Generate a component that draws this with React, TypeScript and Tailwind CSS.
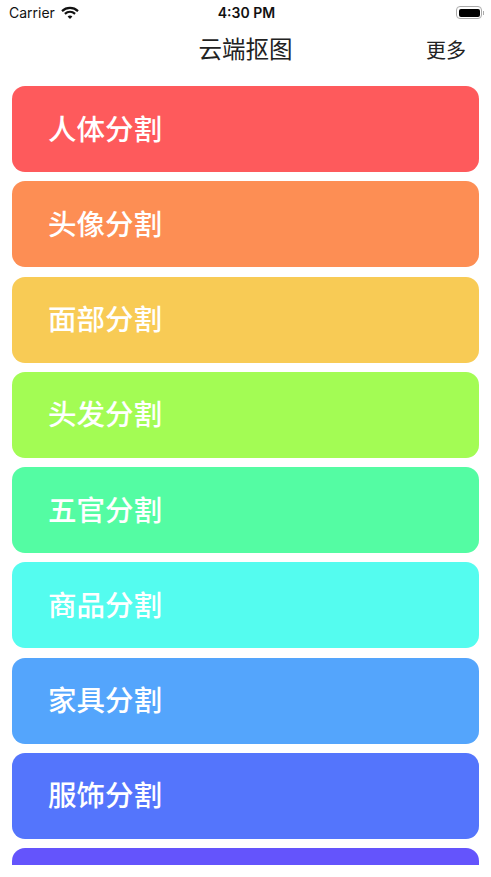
import React from 'react';

const font = "font-['Noto_Sans_CJK_SC','Liberation_Sans',sans-serif]";

const items = [
  { name: '人体分割', color: 'bg-[#fe5a5c]' },
  { name: '头像分割', color: 'bg-[#fd8e54]' },
  { name: '面部分割', color: 'bg-[#f8cb55]' },
  { name: '头发分割', color: 'bg-[#a3fc54]' },
  { name: '五官分割', color: 'bg-[#54fca3]' },
  { name: '商品分割', color: 'bg-[#54fcef]' },
  { name: '家具分割', color: 'bg-[#54a5fc]' },
  { name: '服饰分割', color: 'bg-[#5475fc]' },
  { name: '', color: 'bg-[#6454fc]' },
];

const StatusBar = () => (
  <div className="flex h-[25px] items-center justify-between pl-[9px] pr-[7px] text-[#111] font-['Inter',sans-serif]">
    <div className="flex w-[120px] items-center gap-[6px]">
      <span className="text-[14px] leading-none">Carrier</span>
      <svg width="18" height="14" viewBox="0 0 18 13" fill="none" stroke="#111" strokeWidth="2.2">
        <path d="M1 4.6C5.6 .4 12.4 .4 17 4.6" />
        <path d="M3.9 7.4C6.9 4.8 11.1 4.8 14.1 7.4" />
        <path d="M9 12.6l2.4-2.6C10 8.8 8 8.8 6.6 10z" fill="#111" stroke="none" />
      </svg>
    </div>
    <span className="text-[14px] font-semibold leading-none">4:30 PM</span>
    <div className="flex w-[120px] items-center justify-end">
      <div className="flex h-[13px] w-[26px] items-center rounded-[4px] border border-[#aaa] p-[1.5px]">
        <div className="h-full w-full rounded-[2px] bg-black" />
      </div>
      <div className="ml-[1px] h-[4px] w-[1px] bg-[#aaa]" />
    </div>
  </div>
);

export default function App() {
  return (
    <div className={`flex h-[877px] w-[491px] flex-col overflow-hidden bg-white ${font}`}>
      <StatusBar />
      <div className="flex h-[61px] items-start justify-between pt-[7px]">
        <div className="w-[100px]" />
        <h1 className="text-[23.5px] font-normal leading-[32px] text-[#222]">云端抠图</h1>
        <button className="w-[100px] pr-[25px] pt-[2px] text-right text-[20px] leading-[32px] text-[#222]">更多</button>
      </div>
      <div className="mx-[12px] flex h-[779px] flex-col gap-[9.25px] overflow-hidden">
        {items.map((item, i) => (
          <div
            key={i}
            className={`flex h-[86px] shrink-0 items-center rounded-[13px] pb-[2px] pl-[36px] text-[28.5px] font-medium text-white ${item.color}`}
          >
            {item.name}
          </div>
        ))}
      </div>
    </div>
  );
}
